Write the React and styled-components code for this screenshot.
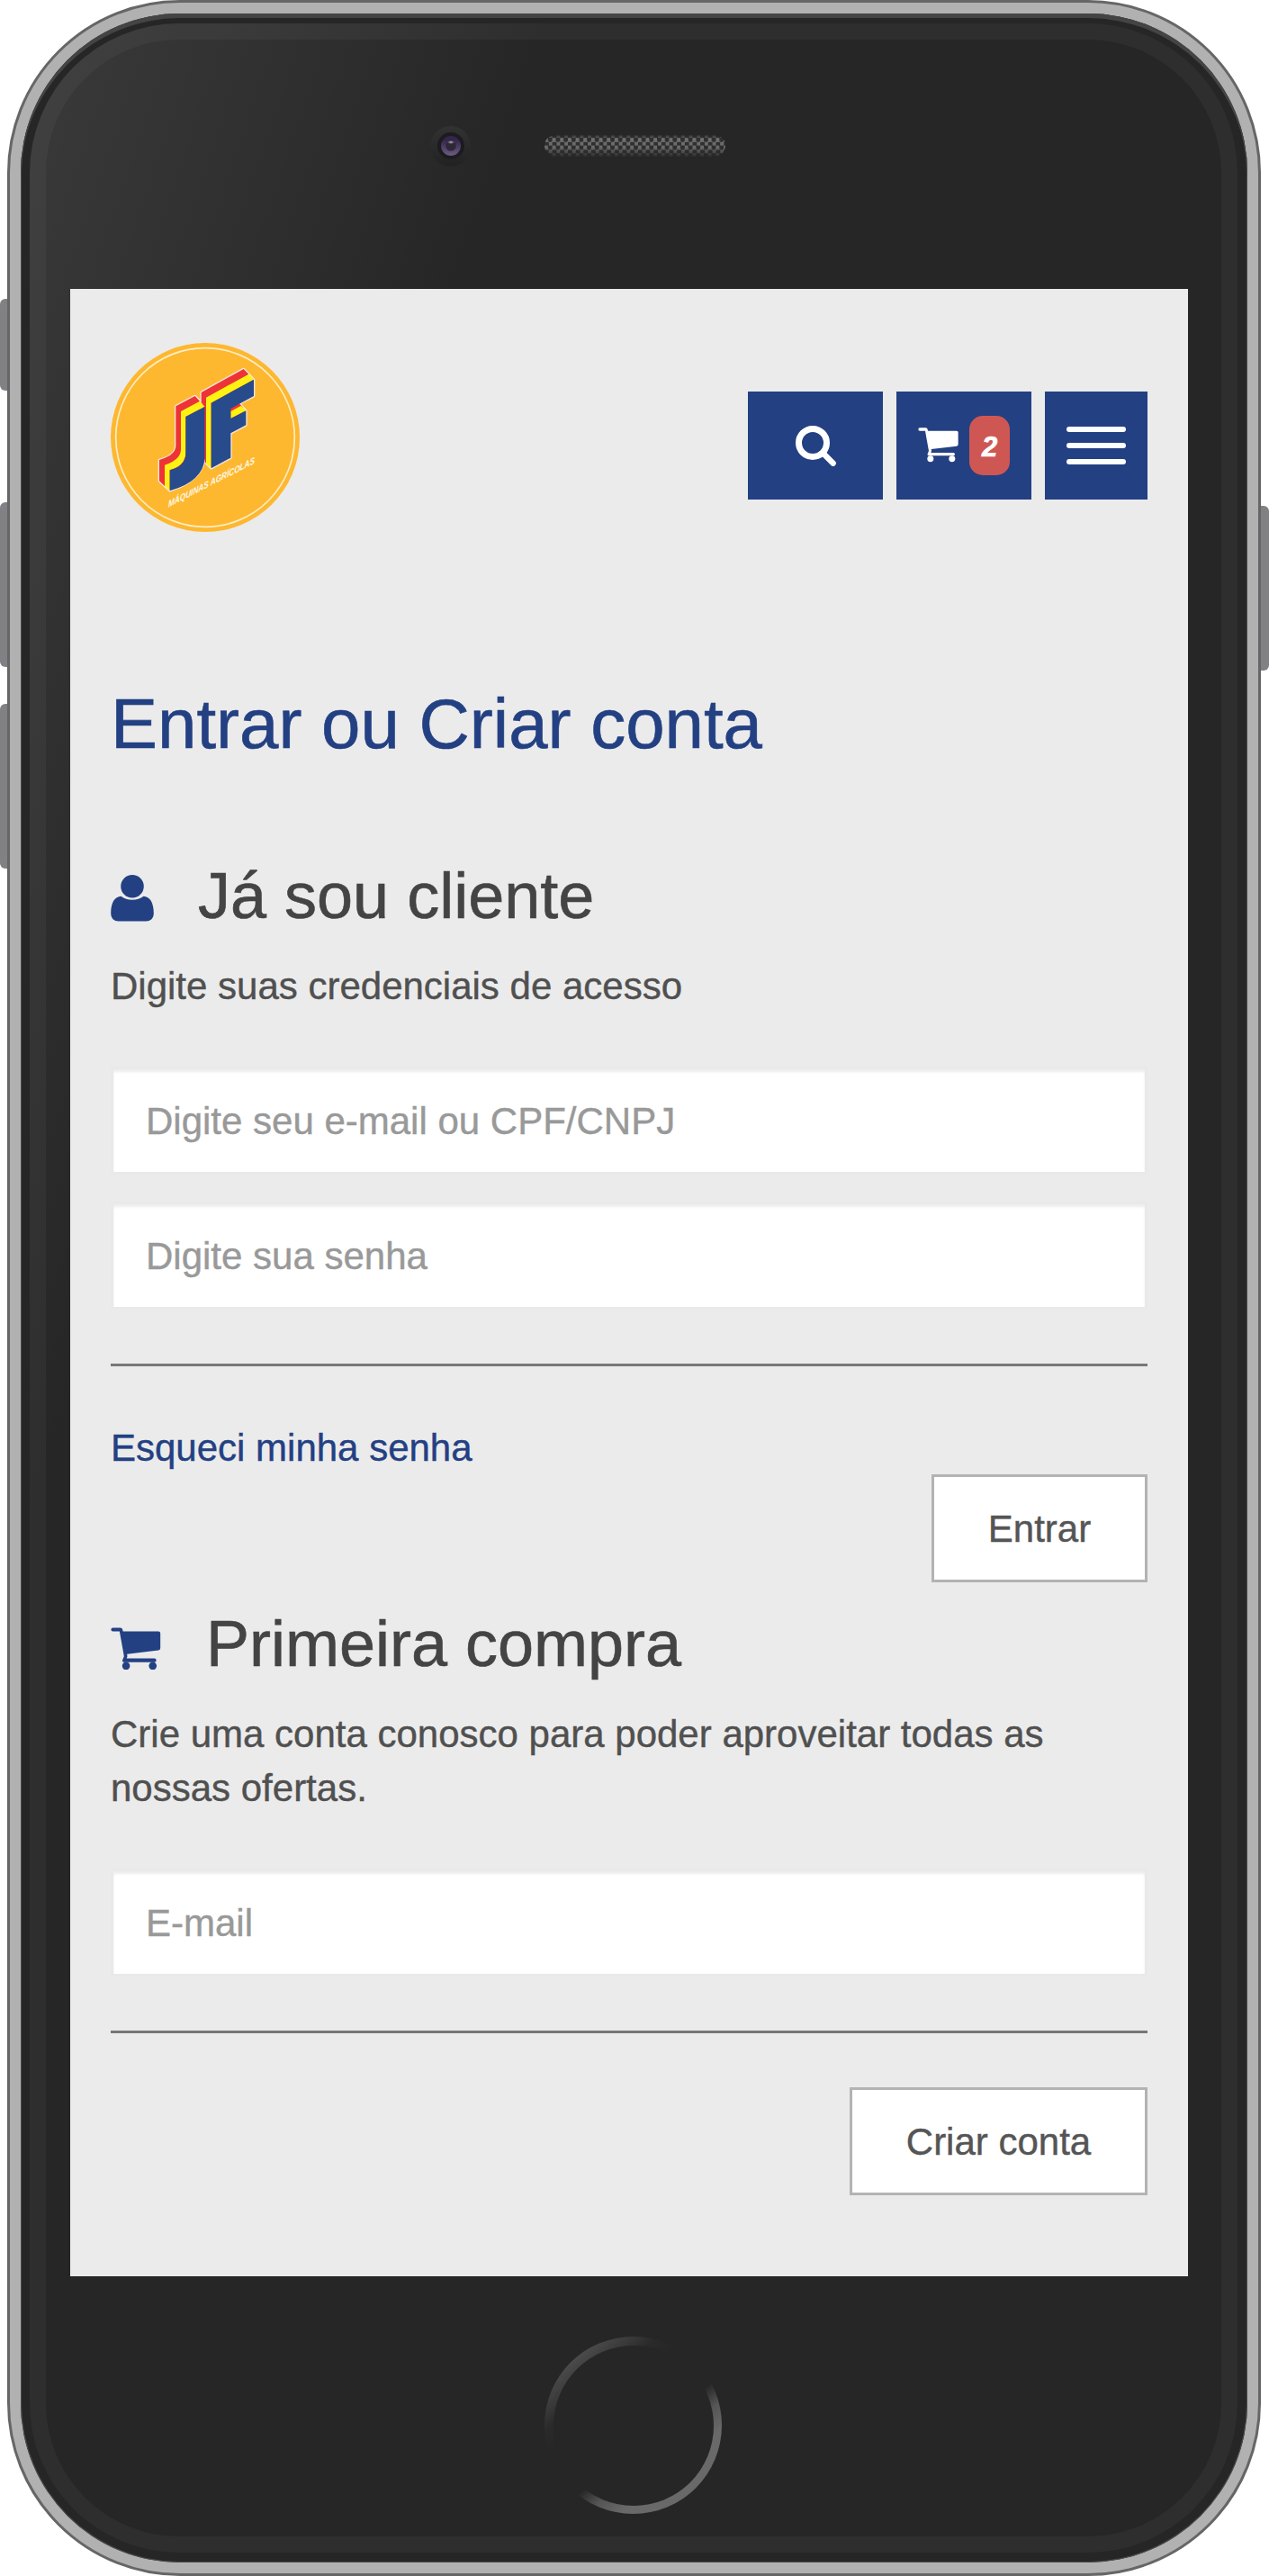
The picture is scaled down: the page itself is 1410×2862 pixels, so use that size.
import React from "react";
import styled, { createGlobalStyle } from "styled-components";

const NAVY = "#234083";
const SANS = '"Liberation Sans", Arial, Helvetica, sans-serif';

const GlobalStyle = createGlobalStyle`
  *, *::before, *::after { box-sizing: border-box; }
  body { margin: 0; background: #fff; }
`;

/* ---------- phone ---------- */

const Phone = styled.div`
  display: flex;
  width: 1410px;
  height: 2862px;
  font-family: ${SANS};
`;

const Rail = styled.div`
  display: flex;
  flex-direction: column;
  flex: none;
  width: ${(p) => p.$width}px;
  gap: 41px;
  padding-top: ${(p) => p.$top}px;
`;

const SideKey = styled.i`
  display: block;
  height: ${(p) => p.$height}px;
  margin-bottom: ${(p) => p.$after || 0}px;
  background: #808085;
  border-radius: ${(p) => (p.$right ? "0 6px 6px 0" : "6px 0 0 6px")};
`;

const Shell = styled.div`
  flex: 1;
  padding: 12px;
  background: #b1b1b1;
  border: 3px solid #666;
  border-radius: 192px;
`;

const Face = styled.div`
  height: 100%;
  padding: 11px 11px 11px 10px;
  background: #262626;
  border-radius: 177px;
  box-shadow: inset 0 5px 0 #434543, inset 0 0 0 1px #4c4c4c;
`;

const Glass = styled.div`
  display: flex;
  flex-direction: column;
  height: 100%;
  padding-left: 27px;
  border: 18px solid rgba(255, 255, 255, 0.038);
  border-radius: 166px;
  background: linear-gradient(109deg, #3a3a3a 0, #262626 540px) border-box;
`;

const TopBezel = styled.div`
  display: flex;
  align-items: center;
  height: 277px;
  padding: 0 0 41px 400px;
`;

const Camera = styled.i`
  display: grid;
  place-items: center;
  width: 45px;
  height: 45px;
  border-radius: 50%;
  background: linear-gradient(#323232, #222);

  &::before {
    content: "";
    width: 30px;
    height: 30px;
    border: 4px solid #1c1b20;
    border-radius: 50%;
    background:
      radial-gradient(ellipse 4px 2px at 11px 7px, #b5b2bb, transparent),
      radial-gradient(circle at 11px 11px, #2d2738 5px, transparent 6.5px),
      linear-gradient(#33264a 20%, #6c5c82);
  }
`;

const Speaker = styled.i`
  width: 201px;
  height: 24px;
  margin-left: 82px;
  border-radius: 12px;
  background:
    linear-gradient(rgba(38, 38, 38, 0.9), rgba(38, 38, 38, 0) 18%, rgba(38, 38, 38, 0.1) 60%, rgba(38, 38, 38, 0.9)),
    repeating-conic-gradient(#303030 0 25%, #707070 0 50%) 0 3px / 8.67px 8.67px;
`;

const BottomBezel = styled.div`
  display: flex;
  flex: 1;
  padding: 67px 0 0 527px;
`;

const HomeKey = styled.i`
  width: 197px;
  height: 197px;
  padding: 9.5px;
  border-radius: 50%;
  background: linear-gradient(140deg, #4a4a4a 15%, #393939 23%, #2a2a2a 29%, #262626 37%, #262626 57%, #555 65%, #696969 74%);

  &::before {
    content: "";
    display: block;
    height: 100%;
    border-radius: 50%;
    background: #262626;
  }
`;

/* ---------- page ---------- */

const Screen = styled.main`
  flex: none;
  width: 1242px;
  height: 2208px;
  padding: 60px 45px 0;
  background: #ebebeb;
  color: #505050;
`;

const Header = styled.header`
  display: flex;
  align-items: flex-start;
  justify-content: space-between;
  height: 380px;
`;

const Toolbar = styled.nav`
  display: flex;
  gap: 15px;
  padding-top: 54px;
`;

const Tool = styled.button`
  display: flex;
  align-items: center;
  justify-content: center;
  width: ${(p) => p.$width}px;
  height: 120px;
  padding: 0;
  gap: ${(p) => p.$gap || 0}px;
  border: 0;
  background: ${NAVY};
  color: #fff;
  font-family: inherit;

  svg { margin-top: ${(p) => p.$drop || 0}px; }
`;

const Count = styled.span`
  width: 45px;
  height: 66px;
  border-radius: 15px;
  background: #cf5753;
  font: italic bold 31px/70px ${SANS};
  text-align: center;
  -webkit-text-stroke: 0.7px #fff;
`;

const Burger = styled.span`
  display: flex;
  flex-direction: column;
  gap: 12px;

  i {
    width: 66px;
    height: 6px;
    border-radius: 3px;
    background: #fff;
  }
`;

const Title = styled.h1`
  margin: 0 0 108px;
  color: ${NAVY};
  font-size: 78px;
  font-weight: 400;
  line-height: 86px;
  -webkit-text-stroke: 0.6px;
`;

const Heading = styled.h2`
  display: flex;
  align-items: flex-end;
  gap: ${(p) => p.$gap}px;
  height: 80px;
  margin: ${(p) => p.$top || 0}px 0 30px;
  color: #444;
  font-size: 72px;
  font-weight: 400;
  line-height: 80px;
  -webkit-text-stroke: 0.6px;

  svg {
    margin-bottom: 11px;
    color: ${NAVY};
  }
`;

const Lead = styled.p`
  margin: 0 0 59px;
  padding-top: 1px;
  font-size: 42px;
  line-height: 60px;
  -webkit-text-stroke: 0.4px;
`;

const Field = styled.input`
  display: block;
  width: 100%;
  height: 120px;
  padding: 1px 36px 0;
  border: 3px solid #e9e9e9;
  border-radius: 0;
  background: #fff;
  box-shadow: inset 0 3px 3px rgba(0, 0, 0, 0.075);
  font: 42px ${SANS};
  -webkit-text-stroke: 0.4px;

  & + & { margin-top: 30px; }
  &::placeholder { color: #999; opacity: 1; }
`;

const Rule = styled.hr`
  height: 3px;
  margin: 60px 0;
  border: 0;
  background: #777;
`;

const Forgot = styled.a`
  display: block;
  height: 60px;
  padding-top: 1px;
  color: ${NAVY};
  font-size: 42px;
  line-height: 60px;
  -webkit-text-stroke: 0.4px;
`;

const Actions = styled.div`
  display: flex;
  justify-content: flex-end;
`;

const Submit = styled.button`
  width: ${(p) => p.$width}px;
  height: 120px;
  padding: 1px 0 0;
  border: 3px solid #b3b3b3;
  background: #fff;
  color: #555;
  font: 42px ${SANS};
  -webkit-text-stroke: 0.4px;
`;

/* ---------- drawings ---------- */

const LogoArt = styled.svg`
  width: 210px;
  height: 210px;

  text { font: italic bold 31px ${SANS}; fill: #fff8e8; }
`;

const Logo = () => (
  <LogoArt viewBox="69 63 630 630">
    <circle cx="384" cy="378" r="315" fill="#fdb830" />
    <circle cx="384" cy="378" r="298" fill="none" stroke="#ffedc8" strokeWidth="5" />
    <g stroke="#fbe6dc" strokeWidth="8" strokeLinejoin="round">
      <path d="M286 274L350 240L383 275V440Q378 520 266 556L231 523V453Q286 440 286 405Z" fill="#ee3338" />
      <path d="M371 228L512 150L546 185V240L498 265L520 289V337L469 364V446L404 481L383 460L371 440Z" fill="#ee3338" />
    </g>
    <path d="M286 274L350 240L366 257L303 291V418Q300 455 249 470V540L231 523V453Q286 437 286 405Z" fill="#ee3338" />
    <path d="M303 291L366 257L383 275L319 309V430Q318 472 266 487V556L249 540V470Q303 452 303 418Z" fill="#fff212" />
    <path d="M319 309L383 275V445Q378 525 266 556V487Q319 474 319 430Z" fill="#284b8c" />
    <path d="M371 228L512 150L529 167L387 245V464L383 460V275L371 262Z" fill="#ee3338" />
    <path d="M387 245L529 167L546 185L404 263V481L387 464Z" fill="#fff212" />
    <path d="M469 281L498 265L510 278L469 300Z" fill="#ee3338" />
    <path d="M469 291L504 272L520 289L469 315Z" fill="#fff212" />
    <path d="M404 263L546 185V240L469 282V315L520 289V337L469 364V446L404 481Z" fill="#284b8c" />
    <text transform="translate(261 611) skewY(-27)" textLength="288" lengthAdjust="spacingAndGlyphs">
      MÁQUINAS AGRÍCOLAS
    </text>
  </LogoArt>
);

const SearchIcon = () => (
  <svg width="45" height="45" viewBox="0 0 45 45" fill="none" stroke="#fff">
    <circle cx="19" cy="19" r="15.5" strokeWidth="7" />
    <path d="M31 31L41.7 41.7" strokeWidth="6.4" strokeLinecap="round" />
  </svg>
);

const CartIcon = ({ width, height }) => (
  <svg width={width} height={height} viewBox="628 196 136 115" fill="currentColor">
    <path d="M634 197H654Q659 197 660 202L661 207H757A5 5 0 0 1 762 212V252Q762 257 757 258L672 268L673 274L671 280H746A5 5 0 0 1 746 290H664Q658 290 660 284L664 274L652 207H634A5 5 0 0 1 634 197Z" />
    <circle cx="669.5" cy="300" r="10.5" />
    <circle cx="741.5" cy="300" r="10.5" />
  </svg>
);

const UserIcon = () => (
  <svg width="48" height="52" viewBox="0 0 48 52" fill="currentColor">
    <circle cx="24" cy="12.8" r="12.8" />
    <path d="M11.500 23.800C15 26.600 19 27.800 24 27.800S33 26.600 36.500 23.800C43.500 24 47.800 31 47.800 42.500C47.800 48 44.500 51.500 39.500 51.500H8.500C3.500 51.500 .2 48 .2 42.500C.2 31 4.500 24 11.500 23.800Z" />
  </svg>
);

export default function App() {
  return (
    <>
      <GlobalStyle />
      <Phone>
        <Rail $width={8} $top={332}>
          <SideKey $height={102} $after={83} />
          <SideKey $height={183} />
          <SideKey $height={183} />
        </Rail>
        <Shell>
          <Face>
            <Glass>
              <TopBezel>
                <Camera />
                <Speaker />
              </TopBezel>
              <Screen>
                <Header>
                  <Logo />
                  <Toolbar>
                    <Tool $width={150} aria-label="Buscar">
                      <SearchIcon />
                    </Tool>
                    <Tool $width={150} $gap={12} $drop={-1} aria-label="Carrinho">
                      <CartIcon width={45.3} height={38.3} />
                      <Count>2</Count>
                    </Tool>
                    <Tool $width={114} aria-label="Menu">
                      <Burger>
                        <i />
                        <i />
                        <i />
                      </Burger>
                    </Tool>
                  </Toolbar>
                </Header>
                <Title>Entrar ou Criar conta</Title>
                <Heading $gap={49}>
                  <UserIcon />
                  Já sou cliente
                </Heading>
                <Lead>Digite suas credenciais de acesso</Lead>
                <Field placeholder="Digite seu e-mail ou CPF/CNPJ" />
                <Field placeholder="Digite sua senha" type="password" />
                <Rule />
                <Forgot>Esqueci minha senha</Forgot>
                <Actions>
                  <Submit $width={240}>Entrar</Submit>
                </Actions>
                <Heading $top={28} $gap={50}>
                  <CartIcon width={56} height={47.4} />
                  Primeira compra
                </Heading>
                <Lead>Crie uma conta conosco para poder aproveitar todas as nossas ofertas.</Lead>
                <Field placeholder="E-mail" />
                <Rule />
                <Actions>
                  <Submit $width={331}>Criar conta</Submit>
                </Actions>
              </Screen>
              <BottomBezel>
                <HomeKey />
              </BottomBezel>
            </Glass>
          </Face>
        </Shell>
        <Rail $width={9} $top={562}>
          <SideKey $height={183} $right />
        </Rail>
      </Phone>
    </>
  );
}
